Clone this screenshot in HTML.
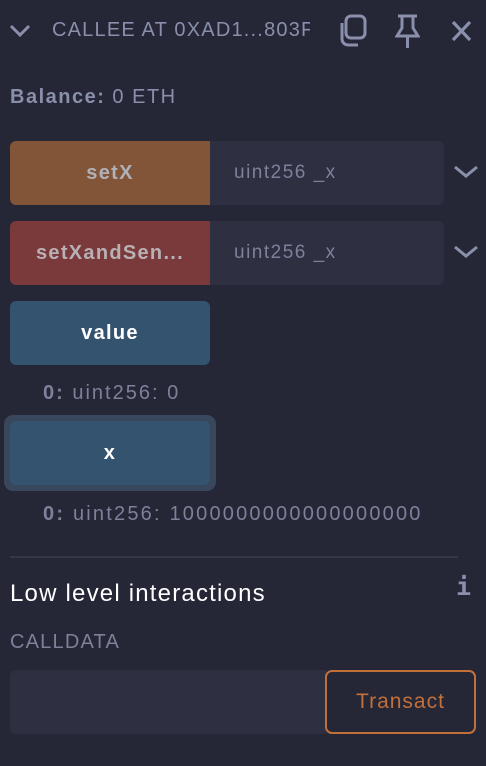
<!DOCTYPE html>
<html><head><meta charset="utf-8"><style>
*{margin:0;padding:0;box-sizing:border-box}
body{width:486px;height:766px;background:#252636;font-family:"Liberation Sans",sans-serif;position:relative;overflow:hidden;color:#8a8fab}
.a{position:absolute;white-space:nowrap}
.btn{position:absolute;left:10px;width:200px;height:64px;border-radius:6px 0 0 6px;font-weight:bold;font-size:20px;letter-spacing:1.3px;display:flex;align-items:center;justify-content:center}
.inp{position:absolute;left:210px;width:234px;height:64px;background:#2e2f41;border-radius:0 6px 6px 0;font-size:19px;letter-spacing:1.5px;color:#7d8199;padding-left:24px;line-height:64px}
</style></head><body>
<svg class="a" style="left:9px;top:24px" width="22" height="14" viewBox="0 0 22 14"><path d="M2 2 L11 11 L20 2" stroke="#8a8fab" stroke-width="3" fill="none"/></svg>
<div class="a" style="left:52px;top:19px;font-size:20px;letter-spacing:1.2px;width:258px;overflow:hidden;color:#8a8fab">CALLEE AT 0XAD1...803F</div>
<svg class="a" style="left:337px;top:14px" width="31" height="34" viewBox="0 0 31 34"><rect x="9" y="2" width="19" height="22" rx="5" stroke="#8a8fab" stroke-width="3" fill="none"/><path d="M5 9 V25 a6 6 0 0 0 6 6 H21" stroke="#8a8fab" stroke-width="3" fill="none"/></svg>
<svg class="a" style="left:395px;top:14px" width="25" height="35" viewBox="0 0 25 35"><path d="M3 2 H22 M7 2 V14 L2 22 H23 L18 14 V2 M12.5 22 V34" stroke="#8a8fab" stroke-width="3" fill="none"/></svg>
<svg class="a" style="left:451px;top:21px" width="21" height="20" viewBox="0 0 21 20"><path d="M2 1 L19 19 M19 1 L2 19" stroke="#8a8fab" stroke-width="3.2"/></svg>
<div class="a" style="left:10px;top:86px;font-size:20px;letter-spacing:1.5px"><b>Balance:</b> 0 ETH</div>

<div class="btn" style="top:141px;background:#825539;color:#b0b0b8">setX</div>
<div class="inp" style="top:141px">uint256 _x</div>
<svg class="a" style="left:453px;top:165px" width="26" height="14" viewBox="0 0 26 14"><path d="M2 2 L13 11 L24 2" stroke="#8a8fab" stroke-width="3" fill="none"/></svg>
<div class="btn" style="top:221px;background:#7a3a3b;color:#b8b0b4">setXandSen...</div>
<div class="inp" style="top:221px">uint256 _x</div>
<svg class="a" style="left:453px;top:245px" width="26" height="14" viewBox="0 0 26 14"><path d="M2 2 L13 11 L24 2" stroke="#8a8fab" stroke-width="3" fill="none"/></svg>

<div class="btn" style="top:301px;background:#34536f;color:#fff;border-radius:6px">value</div>
<div class="a" style="left:43px;top:382px;font-size:20px;letter-spacing:2px;color:#7d8199"><b>0:</b> uint256: 0</div>
<div class="a" style="left:4px;top:415px;width:212px;height:76px;border-radius:9px;background:#38475b"></div>
<div class="btn" style="top:421px;background:#34536f;color:#fff;border-radius:6px">x</div>
<div class="a" style="left:43px;top:503px;font-size:20px;letter-spacing:2.2px;color:#7d8199"><b>0:</b> uint256: 1000000000000000000</div>

<div class="a" style="left:10px;top:556px;width:448px;height:2px;background:#363849"></div>
<div class="a" style="left:10px;top:580px;font-size:24px;letter-spacing:1.2px;color:#fff">Low level interactions</div>
<div class="a" style="left:456px;top:572px;font-size:25px;font-weight:bold;font-family:'DejaVu Sans Mono',monospace;color:#8a8fab">i</div>
<div class="a" style="left:10px;top:631px;font-size:20px;letter-spacing:1.2px;color:#7d8199">CALLDATA</div>
<div class="a" style="left:10px;top:670px;width:316px;height:64px;background:#2e2f41;border-radius:6px 0 0 6px"></div>
<div class="a" style="left:325px;top:670px;width:151px;height:64px;border:2px solid #c2703a;border-radius:7px;color:#c2703a;font-size:21px;letter-spacing:1px;display:flex;align-items:center;justify-content:center">Transact</div>
</body></html>
